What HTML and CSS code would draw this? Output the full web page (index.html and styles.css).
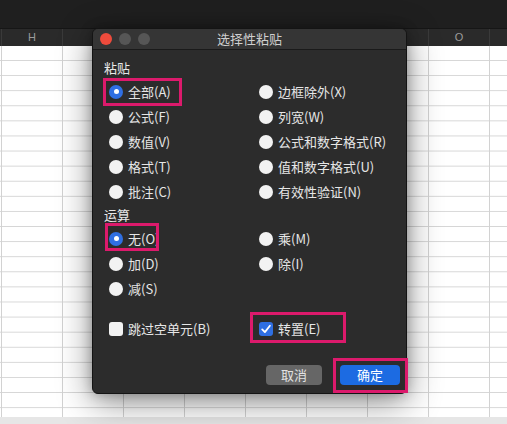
FILE: index.html
```html
<!DOCTYPE html>
<html lang="zh">
<head>
<meta charset="utf-8">
<title>选择性粘贴</title>
<link rel="stylesheet" href="styles.css">
</head>
<body>
<div class="app">
  <div class="topbar"></div>
  <div class="colhead">
    <div class="col">H</div><div class="col"></div><div class="col"></div><div class="col"></div>
    <div class="col"></div><div class="col"></div><div class="col"></div><div class="col">O</div><div class="col last"></div>
  </div>
  <div class="sheet"></div>
  <div class="bottombar"></div>

  <div class="dialog">
    <div class="titlebar">
      <div class="lights"><span class="light red"></span><span class="light gray"></span><span class="light gray"></span></div>
      <div class="title">选择性粘贴</div>
    </div>
    <div class="body">
      <div class="section-label">粘贴</div>
      <div class="options">
        <label class="opt"><span class="radio on"></span>全部(A)</label>
        <label class="opt"><span class="radio"></span>边框除外(X)</label>
        <label class="opt"><span class="radio"></span>公式(F)</label>
        <label class="opt"><span class="radio"></span>列宽(W)</label>
        <label class="opt"><span class="radio"></span>数值(V)</label>
        <label class="opt"><span class="radio"></span>公式和数字格式(R)</label>
        <label class="opt"><span class="radio"></span>格式(T)</label>
        <label class="opt"><span class="radio"></span>值和数字格式(U)</label>
        <label class="opt"><span class="radio"></span>批注(C)</label>
        <label class="opt"><span class="radio"></span>有效性验证(N)</label>
      </div>
      <div class="section-label">运算</div>
      <div class="options">
        <label class="opt"><span class="radio on"></span>无(O)</label>
        <label class="opt"><span class="radio"></span>乘(M)</label>
        <label class="opt"><span class="radio"></span>加(D)</label>
        <label class="opt"><span class="radio"></span>除(I)</label>
        <label class="opt"><span class="radio"></span>减(S)</label>
      </div>
      <div class="options checks">
        <label class="opt"><span class="check"></span>跳过空单元(B)</label>
        <label class="opt"><span class="check on"><svg viewBox="0 0 14 14" width="14" height="14"><path d="M3.2 7.4 L5.9 10.1 L10.9 3.8" fill="none" stroke="#fff" stroke-width="1.8" stroke-linecap="round" stroke-linejoin="round"/></svg></span>转置(E)</label>
      </div>
      <div class="buttons">
        <button class="btn cancel">取消</button>
        <button class="btn ok">确定</button>
      </div>
    </div>
    <div class="mark m1"></div>
    <div class="mark m2"></div>
    <div class="mark m3"></div>
    <div class="mark m4"></div>
  </div>
</div>
</body>
</html>
```

FILE: styles.css
```css
* { box-sizing: border-box; }
html, body { margin: 0; padding: 0; }
body {
  width: 507px;
  height: 424px;
  overflow: hidden;
  font-family: "Noto Sans CJK SC", "Noto Sans", sans-serif;
  background: #ffffff;
}
.app {
  position: relative;
  width: 507px;
  height: 424px;
  overflow: hidden;
  display: flex;
  flex-direction: column;
}
.topbar {
  height: 28px;
  background: #1f1f1f;
}
.colhead {
  height: 18px;
  background: #2a2a2a;
  display: flex;
  padding-left: 1px;
  border-top: 1px solid #161616;
  overflow: hidden;
}
.col {
  flex: 0 0 61px;
  border-left: 1px solid #3a3a3a;
  color: #9c9c9c;
  font-family: "Liberation Sans", sans-serif;
  font-size: 11px;
  line-height: 17px;
  text-align: center;
}
.col.last {
  flex: 1 1 auto;
  min-width: 0;
}
.sheet {
  flex: 1;
  background-color: #ffffff;
  background-image:
    linear-gradient(to right, #d2d2d2 0 1px, transparent 1px),
    linear-gradient(to bottom, #d6d6d6 0 1px, transparent 1px);
  background-size: 61px 100%, 100% 15.1px;
  background-position: 1px 0, 0 14px;
}
.bottombar {
  height: 7px;
  background: #e6e6e6;
}

/* dialog */
.dialog {
  position: absolute;
  left: 92px;
  top: 28px;
  width: 315px;
  height: 366px;
  background: #2c2c2c;
  border: 1px solid #141414;
  border-radius: 6px;
  box-shadow: 0 8px 34px rgba(0, 0, 0, 0.45), 0 0 12px rgba(0, 0, 0, 0.25);
  color: #e6e6e6;
}
.titlebar {
  position: relative;
  height: 21px;
  background: #353535;
  border-bottom: 1px solid #1a1a1a;
  border-radius: 5px 5px 0 0;
  display: flex;
  align-items: center;
  justify-content: center;
}
.lights {
  position: absolute;
  left: 7px;
  top: 4px;
  display: flex;
  gap: 7px;
}
.light {
  width: 12px;
  height: 12px;
  border-radius: 50%;
}
.light.red { background: #ee4b3c; }
.light.gray { background: #565656; }
.title {
  font-size: 13px;
  line-height: 20px;
  color: #cfcfcf;
}
.body {
  padding-top: 7px;
}
.section-label {
  height: 22px;
  line-height: 22px;
  padding-left: 11px;
  font-size: 13px;
  color: #e8e8e8;
}
.options {
  display: grid;
  grid-template-columns: 150px 1fr;
  padding-left: 16px;
}
.opt {
  height: 25px;
  display: flex;
  align-items: center;
  font-size: 13px;
  color: #e6e6e6;
  white-space: nowrap;
}
.radio {
  width: 14px;
  height: 14px;
  border-radius: 50%;
  background: #f2f2f2;
  margin-right: 5px;
  flex: 0 0 14px;
  display: flex;
  align-items: center;
  justify-content: center;
}
.radio.on {
  background: #2f6fe3;
}
.radio.on::after {
  content: "";
  width: 5px;
  height: 5px;
  border-radius: 50%;
  background: #ffffff;
}
.checks {
  margin-top: 15px;
}
.check {
  width: 14px;
  height: 14px;
  border-radius: 3px;
  background: #f2f2f2;
  margin-right: 5px;
  flex: 0 0 14px;
  display: flex;
}
.check.on {
  background: #2f6fe3;
}
.buttons {
  display: flex;
  justify-content: flex-end;
  gap: 18px;
  padding-right: 6px;
  margin-top: 24px;
}
.btn {
  height: 20px;
  border: none;
  border-radius: 4px;
  font-family: "Noto Sans CJK SC", sans-serif;
  font-size: 13px;
  line-height: 20px;
  padding: 0;
}
.btn.cancel {
  width: 56px;
  background: #666666;
  color: #e2e2e2;
}
.btn.ok {
  width: 60px;
  background: #1c6be2;
  color: #ffffff;
}

/* annotation highlight boxes */
.mark {
  position: absolute;
  border: 3px solid #dc1a6c;
}
.m1 { left: 10px; top: 49px; width: 79px; height: 28px; }
.m2 { left: 12px; top: 194px; width: 54px; height: 28px; }
.m3 { left: 157px; top: 283px; width: 96px; height: 31px; }
.m4 { left: 240px; top: 329px; width: 75px; height: 35px; }
```
